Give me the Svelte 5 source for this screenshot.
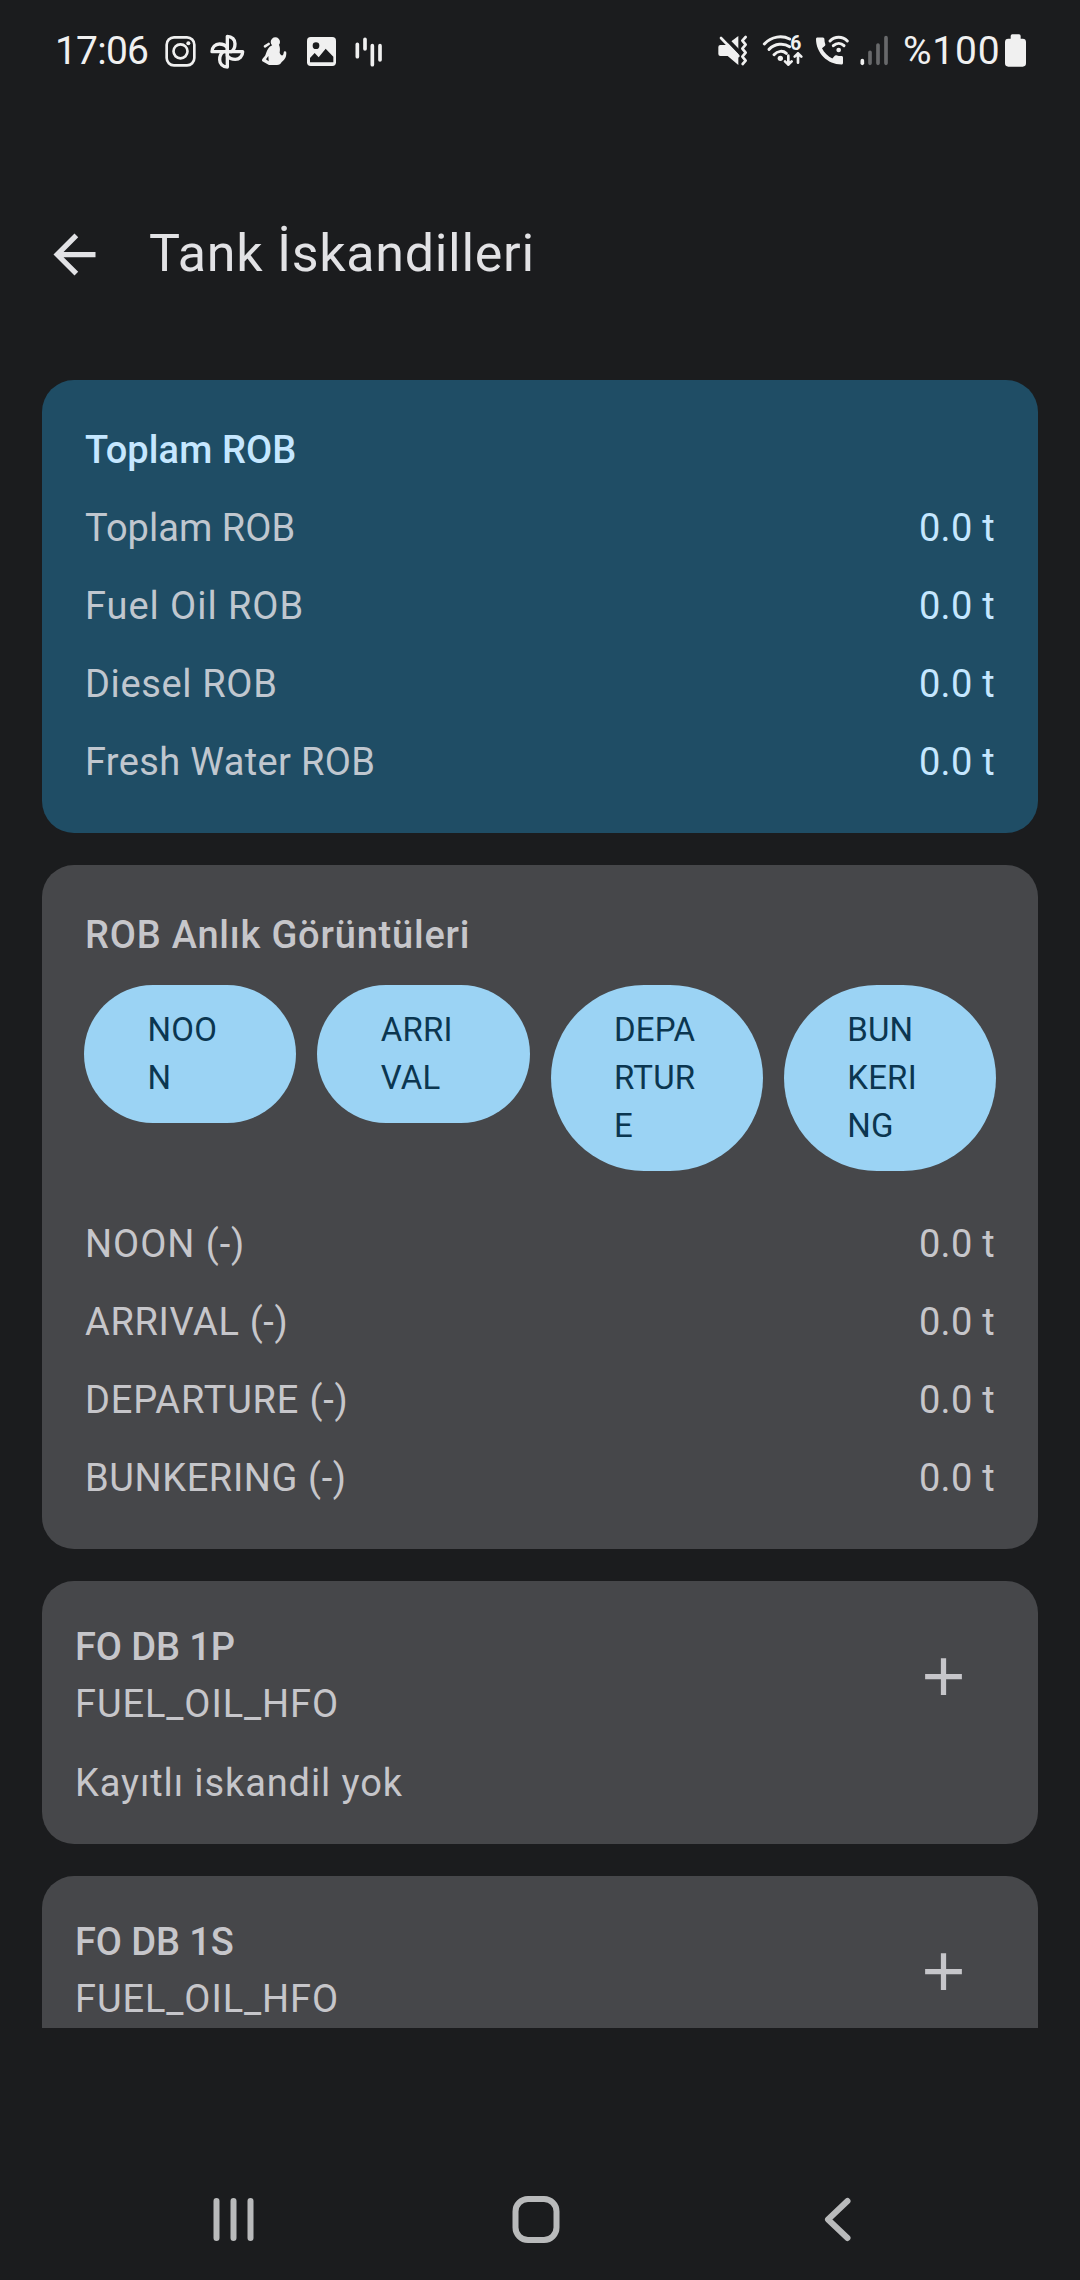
<script>
  // tracking is the letter spacing in px
  const totals = [
    { label: "Toplam ROB", value: 0, tracking: 0.05 },
    { label: "Fuel Oil ROB", value: 0, tracking: 0.95 },
    { label: "Diesel ROB", value: 0, tracking: 0.65 },
    { label: "Fresh Water ROB", value: 0, tracking: 0.35 },
  ];

  let snapshots = $state([
    { name: "NOON", lines: ["NOO", "N"], value: 0, tracking: 0.95 },
    { name: "ARRIVAL", lines: ["ARRI", "VAL"], value: 0, tracking: 0.65 },
    { name: "DEPARTURE", lines: ["DEPA", "RTUR", "E"], value: 0, tracking: 0.8 },
    { name: "BUNKERING", lines: ["BUN", "KERI", "NG"], value: 0, tracking: 0.6 },
  ]);

  const tanks = [
    { name: "FO DB 1P", type: "FUEL_OIL_HFO", note: "Kayıtlı iskandil yok" },
    { name: "FO DB 1S", type: "FUEL_OIL_HFO" },
  ];

  const as_tons = (v) => `${v.toFixed(1)} t`;
</script>

<div class="screen">
  <div class="status_bar">
    <span class="clock">17:06</span>
    <div class="notifications">
      <svg width="47" height="40" viewBox="0 0 141 120">
        <rect class="line" x="29" y="22" width="83" height="84" rx="22" />
        <circle class="line" cx="70.5" cy="64" r="21" />
        <circle cx="94" cy="40" r="6" />
      </svg>
      <svg width="47" height="40" viewBox="0 0 141 120">
        {#each [0, 90, 180, 270] as angle}
          <path
            class="line petal"
            d="M70 65V19C84 19 93 29 93 41C93 52 89 60 82 65Z"
            transform={`rotate(${angle} 70 65)`}
          />
        {/each}
      </svg>
      <svg width="47" height="40" viewBox="0 0 141 120">
        <circle cx="73" cy="36" r="14" />
        <path class="line" d="M42 49L53 42" />
        <path
          fill-rule="evenodd"
          d="M56 50L66 44H84C88 54 87 60 86 68C90 79 97 79 98 68Q98 64 102 64Q107 64 106 70C106 86 97 92 92 96Q88 105 78 105H54L34 94C30 88 40 82 43 76C46 66 50 56 56 50ZM52 78L45 88L53 94Z"
        />
      </svg>
      <svg width="47" height="40" viewBox="0 0 141 120">
        <rect x="27" y="21" width="87" height="87" rx="11" />
        <circle class="cut" cx="54" cy="47" r="10" />
        <path class="cut" d="M36 97V84L50 69L62 82L83 56L106 80V97Z" />
      </svg>
      <svg width="47" height="40" viewBox="0 0 141 120">
        <path class="line thick" d="M37 43V80M60 28V57M82 47V104M105 47V90" />
      </svg>
    </div>
    <div class="system">
      <svg width="46" height="40" viewBox="0 0 138 120">
        <path d="M28 45H46L82 18V105L50 78H28Q22 78 22 72V51Q22 45 28 45Z" />
        <path class="gap" d="M34 14L94 76" />
        <path class="line" d="M30 24L82 78" />
        <path
          class="line"
          d="M104 21L94 32L104 44L94 56L104 68L94 80L104 92L95 102"
        />
      </svg>
      <svg width="52" height="40" viewBox="0 0 156 120">
        <circle cx="70" cy="85" r="8" />
        <path
          class="line arc"
          d="M22 42C44 18 76 16 98 27M36 58C54 40 80 38 98 50M51 74C62 62 78 61 88 70"
        />
        <text x="100" y="60">6</text>
        <path
          class="line"
          d="M94 77V104M84 94L94 104L104 94M123 98V70M113 80L123 70L133 80"
        />
      </svg>
      <svg width="46" height="40" viewBox="0 0 138 120">
        <path
          transform="translate(7.5 9) scale(4.5)"
          d="M20 15.4c-1.2 0-2.4-.2-3.5-.6-.4-.1-.7 0-1 .3l-1.6 1.9c-2.8-1.3-5.5-3.9-6.9-6.8l2-1.7c.3-.3.3-.6.2-1-.4-1.1-.6-2.3-.6-3.5 0-.5-.4-1-1-1H4.2C3.6 3 3 3.200 3 4c0 9.300 7.700 17 17 17 .7 0 1-.6 1-1.200v-3.400c0-.6-.4-1-1-1z"
        />
        <circle cx="89" cy="60" r="7" />
        <path
          class="line arc"
          d="M63 33C78 18 100 18 115 33M73 47C83 38 96 38 105 47"
        />
      </svg>
      <svg width="38" height="40" viewBox="0 0 114 120">
        <path class="line thick" d="M22 92V100" />
        <path class="line thick off" d="M45 67V100M69 45V100M93 23V100" />
      </svg>
      <span class="percent">%100</span>
      <svg class="battery" width="21" height="33" viewBox="0 0 63 99">
        <path
          d="M17 14V6Q17 1 22 1H42Q47 1 47 6V14H53Q63 14 63 24V88Q63 98 53 98H10Q0 98 0 88V24Q0 14 10 14Z"
        />
      </svg>
    </div>
  </div>

  <header>
    <svg width="63" height="63" viewBox="0 0 24 24">
      <path
        d="M20 11H7.83l5.59-5.59L12 4l-8 8 8 8 1.41-1.41L7.83 13H20v-2z"
      />
    </svg>
    <h1>Tank İskandilleri</h1>
  </header>

  <main>
    <section class="card total">
      <h2>Toplam ROB</h2>
      {#each totals as t}
        <div class="row">
          <span style:letter-spacing={`${t.tracking}px`}>{t.label}</span>
          <span class="value">{as_tons(t.value)}</span>
        </div>
      {/each}
    </section>

    <section class="card">
      <h2 class="snap_title">ROB Anlık Görüntüleri</h2>
      <div class="buttons">
        {#each snapshots as s}
          <button>
            {#each s.lines as line}
              <span>{line}</span>
            {/each}
          </button>
        {/each}
      </div>
      {#each snapshots as s}
        <div class="row">
          <span style:letter-spacing={`${s.tracking}px`}>{s.name} (-)</span>
          <span class="value">{as_tons(s.value)}</span>
        </div>
      {/each}
    </section>

    {#each tanks as tank}
      <section class="card tank">
        <div class="tank_head">
          <div>
            <h2>{tank.name}</h2>
            <p>{tank.type}</p>
          </div>
          <svg width="63" height="63" viewBox="0 0 24 24">
            <path d="M19 13h-6v6h-2v-6H5v-2h6V5h2v6h6v2z" />
          </svg>
        </div>
        {#if tank.note}
          <p>{tank.note}</p>
        {/if}
      </section>
    {/each}
  </main>

  <nav>
    <svg width="60" height="60" viewBox="0 0 60 60">
      <path d="M12.5 11V48M29.5 11V48M46.5 11V48" />
    </svg>
    <svg width="60" height="60" viewBox="0 0 60 60">
      <rect x="9.5" y="9" width="41" height="41" rx="12.5" />
    </svg>
    <svg width="60" height="60" viewBox="0 0 60 60">
      <path d="M40.5 11L21 29.5L40.5 48" />
    </svg>
  </nav>
</div>

<style>
  :global(body) {
    margin: 0;
    background: #1b1c1e;
  }
  .screen {
    display: flex;
    flex-direction: column;
    box-sizing: border-box;
    width: 1080px;
    height: 2280px;
    overflow: hidden;
    background: #1b1c1e;
    color: #c6c6ca;
    font-family: Roboto, sans-serif;
    font-size: 38px;
    line-height: 57px;
  }
  h1,
  h2,
  p {
    margin: 0;
  }
  h2 {
    font-size: 38px;
    font-weight: 500;
    letter-spacing: 0.1px;
  }

  .status_bar {
    display: flex;
    height: 40px;
    padding: 30px 54px 0 55px;
    color: #f0f0f0;
    font-size: 39px;
    line-height: 42px;
  }
  .status_bar svg {
    display: block;
    fill: #f0f0f0;
  }
  .clock {
    width: 102px;
    letter-spacing: -0.8px;
  }
  .notifications,
  .system {
    display: flex;
  }
  .system {
    margin-left: auto;
  }
  .percent {
    width: 102px;
    margin-left: 10px;
    letter-spacing: 0.8px;
  }
  .status_bar .battery {
    margin-top: 4px;
  }
  .status_bar text {
    font-size: 58px;
    font-weight: 700;
  }
  .status_bar .line {
    fill: none;
    stroke: #f0f0f0;
    stroke-width: 8;
    stroke-linecap: round;
    stroke-linejoin: round;
  }
  .status_bar .arc {
    stroke-width: 9;
  }
  .status_bar .petal {
    stroke-width: 10;
  }
  .status_bar .thick {
    stroke-width: 11;
  }
  .status_bar .off {
    stroke: #68696b;
  }
  .cut {
    fill: #1b1c1e;
  }
  .gap {
    stroke: #1b1c1e;
    stroke-width: 12;
  }

  header {
    display: flex;
    align-items: center;
    gap: 43px;
    box-sizing: border-box;
    height: 310px;
    padding: 58px 43px 0;
    color: #e2e2e5;
    fill: #e2e2e5;
  }
  h1 {
    font-size: 52px;
    font-weight: 400;
    line-height: 68px;
    letter-spacing: 0.7px;
  }

  main {
    display: flex;
    flex-direction: column;
    gap: 32px;
    height: 1648px;
    padding: 0 42px;
    overflow: hidden;
  }
  .card {
    display: flex;
    flex-direction: column;
    flex-shrink: 0;
    gap: 21px;
    padding: 42px;
    border-radius: 32px;
    background: #46474a;
  }
  .card > h2 {
    padding-left: 1px;
  }
  .card > .snap_title {
    letter-spacing: 0.8px;
  }
  .total {
    background: #1f4d65;
    color: #c0c7cf;
  }
  .total h2,
  .total .value {
    color: #c5e7ff;
  }
  .row {
    display: flex;
    justify-content: space-between;
    padding: 0 1px;
  }
  .value {
    letter-spacing: 0.3px;
  }

  .buttons {
    display: grid;
    grid-template-columns: repeat(4, 1fr);
    gap: 21px;
    align-items: start;
    margin-bottom: 24px;
  }
  button {
    display: flex;
    flex-direction: column;
    align-items: flex-start;
    padding: 21px 0 21px 63.5px;
    border: none;
    border-radius: 999px;
    background: #9bd3f4;
    color: #0b3650;
    font-family: inherit;
    font-size: 33px;
    line-height: 48px;
    letter-spacing: 0.2px;
  }

  .tank {
    gap: 15px;
    padding: 31px 31px 32px 33px;
  }
  .tank_head {
    display: flex;
    align-items: center;
    justify-content: space-between;
    height: 128px;
    padding-right: 32px;
  }
  .tank h2 {
    letter-spacing: -0.1px;
  }
  .tank p {
    letter-spacing: 0.9px;
  }
  .tank_head svg {
    fill: #c6c6ca;
  }

  nav {
    display: flex;
    justify-content: space-between;
    padding: 162px 213px 0 204px;
  }
  nav svg {
    fill: none;
    stroke: #b9babb;
    stroke-width: 6;
    stroke-linecap: round;
    stroke-linejoin: round;
  }
</style>
